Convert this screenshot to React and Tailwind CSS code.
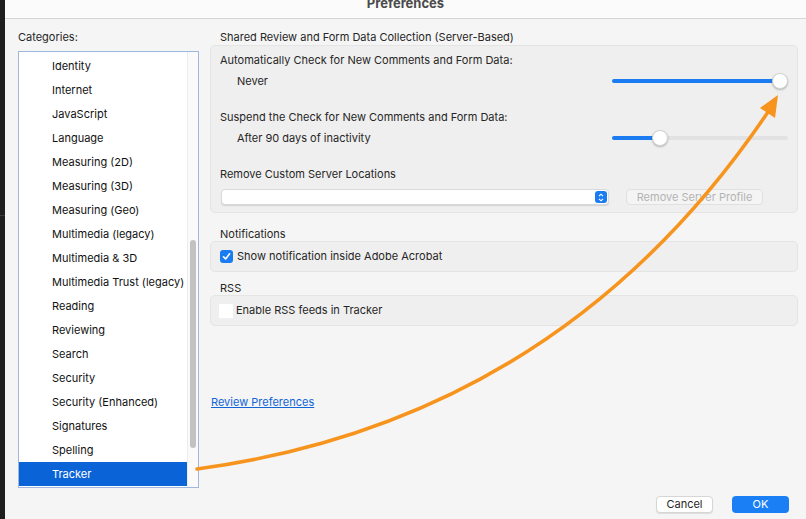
import React from "react";

const categories = [
  "Identity",
  "Internet",
  "JavaScript",
  "Language",
  "Measuring (2D)",
  "Measuring (3D)",
  "Measuring (Geo)",
  "Multimedia (legacy)",
  "Multimedia & 3D",
  "Multimedia Trust (legacy)",
  "Reading",
  "Reviewing",
  "Search",
  "Security",
  "Security (Enhanced)",
  "Signatures",
  "Spelling",
  "Tracker",
];

function Slider({ value }) {
  // value in px from the track start where the thumb centre sits
  return (
    <div className="relative h-4 w-[176px]">
      <div className="absolute left-0 right-0 top-[6px] h-[4px] rounded-full bg-[#e2e2e2]" />
      <div
        className="absolute left-0 top-[6px] h-[4px] rounded-full bg-[#1b7cf1]"
        style={{ width: value }}
      />
      <div
        className="absolute top-0 h-4 w-4 rounded-full border border-[#d4d4d4] bg-white shadow-[0_1px_2px_rgba(0,0,0,0.25)]"
        style={{ left: value - 8 }}
      />
    </div>
  );
}

export default function App() {
  return (
    <div
      className="relative flex h-[519px] w-[806px] overflow-hidden bg-[#f5f5f5] text-[11px] text-[#262626]"
      style={{ fontFamily: "Inter, 'Noto Sans', sans-serif" }}
    >
      <div className="flex w-[5px] flex-col bg-[#1e1e1e]">
        <div className="h-[215px]" />
        <div className="h-px bg-[#3a3a3a]" />
      </div>

      <div className="flex flex-1 flex-col">
        <div className="relative h-[19px] border-b border-[#d6d6d6] bg-[#fbfbfb]">
          <div className="absolute left-0 right-0 top-[-4px] text-center text-[13px] leading-[15px] font-bold text-[#4a4a4a]">
            Preferences
          </div>
        </div>

        <div className="flex flex-1">
          {/* left column */}
          <div className="ml-[13px] flex w-[181px] flex-col pt-[11px]">
            <div className="h-[14px] leading-[14px]">Categories:</div>
            <div className="mt-[7px] flex h-[437px] border border-[#9fb8db] bg-white">
              <div className="flex flex-1 flex-col pt-[2px]">
                {categories.map((c) => (
                  <div
                    key={c}
                    className={
                      c === "Tracker"
                        ? "h-[24px] bg-[#0b63d8] pl-[33px] leading-[24px] text-white"
                        : "h-[24px] pl-[33px] leading-[24px] text-[#111]"
                    }
                  >
                    {c}
                  </div>
                ))}
              </div>
              <div className="flex w-[11px] flex-col items-center border-l border-[#ececec] bg-[#fafafa] pt-[188px]">
                <div className="h-[208px] w-[6px] rounded-full bg-[#c2c2c2]" />
              </div>
            </div>
          </div>

          {/* right column */}
          <div className="ml-[11px] mr-[8px] flex flex-1 flex-col pt-[11px]">
            <div className="h-[14px] pl-[10px] leading-[14px]">
              Shared Review and Form Data Collection (Server-Based)
            </div>
            <div className="mt-px flex flex-col rounded-[5px] border border-[#e4e4e4] bg-[#efefef] px-[9px] pb-[7px] pt-[7px]">
              <div className="h-[14px] leading-[14px]">
                Automatically Check for New Comments and Form Data:
              </div>
              <div className="mt-[7px] flex h-[14px] items-center justify-between">
                <span className="pl-[17px] leading-[14px]">Never</span>
                <Slider value={168} />
              </div>
              <div className="mt-[22px] h-[14px] leading-[14px]">
                Suspend the Check for New Comments and Form Data:
              </div>
              <div className="mt-[7px] flex h-[14px] items-center justify-between">
                <span className="pl-[17px] leading-[14px]">After 90 days of inactivity</span>
                <Slider value={48} />
              </div>
              <div className="mt-[22px] h-[14px] leading-[14px]">
                Remove Custom Server Locations
              </div>
              <div className="mt-[8px] flex items-center">
                <div className="ml-px flex h-[16px] w-[388px] items-center justify-end rounded-[4px] border border-[#d9d9d9] bg-white pr-px shadow-[0_1px_1px_rgba(0,0,0,0.12)]">
                  <div className="flex h-[12px] w-[12px] flex-col items-center justify-center rounded-[3px] bg-[#1b7cf1]">
                    <svg width="6" height="9" viewBox="0 0 6 9">
                      <path
                        d="M1 3.2 L3 1.2 L5 3.2 M1 5.8 L3 7.8 L5 5.8"
                        fill="none"
                        stroke="white"
                        strokeWidth="1.1"
                      />
                    </svg>
                  </div>
                </div>
                <div className="ml-[17px] flex h-[16px] w-[137px] items-center justify-center rounded-[4px] border border-[#e0e0e0] bg-[#f4f4f4] text-[#b3b3b3]">
                  Remove Server Profile
                </div>
              </div>
            </div>

            <div className="mt-[14px] h-[14px] pl-[10px] leading-[14px]">Notifications</div>
            <div className="flex h-[31px] items-center rounded-[5px] border border-[#e4e4e4] bg-[#efefef] pl-[9px]">
              <div className="flex h-[13px] w-[13px] items-center justify-center rounded-[3px] bg-[#1b7cf1]">
                <svg width="9" height="9" viewBox="0 0 9 9">
                  <path
                    d="M1.5 4.8 L3.6 6.9 L7.6 1.8"
                    fill="none"
                    stroke="white"
                    strokeWidth="1.6"
                    strokeLinecap="round"
                    strokeLinejoin="round"
                  />
                </svg>
              </div>
              <span className="ml-[4px]">Show notification inside Adobe Acrobat</span>
            </div>

            <div className="mt-[9px] h-[14px] pl-[10px] leading-[14px]">RSS</div>
            <div className="flex h-[31px] items-center rounded-[5px] border border-[#e4e4e4] bg-[#efefef] pl-[8px]">
              <div className="h-[14px] w-[14px] bg-white" />
              <span className="ml-[3px]">Enable RSS feeds in Tracker</span>
            </div>

            <div className="mt-[69px] h-[14px] pl-px leading-[14px] text-[#1164d6] underline">
              Review Preferences
            </div>

            <div className="flex-1" />
            <div className="flex justify-end gap-[19px] pb-[6px] pr-[9px]">
              <div className="flex h-[17px] w-[57px] items-center justify-center rounded-[4px] border border-[#d6d6d6] bg-white shadow-[0_1px_1px_rgba(0,0,0,0.1)]">
                Cancel
              </div>
              <div className="flex h-[17px] w-[57px] items-center justify-center rounded-[4px] bg-[#1a7ff5] text-white">
                OK
              </div>
            </div>
          </div>
        </div>
      </div>

      {/* annotation arrow */}
      <svg
        className="pointer-events-none absolute left-0 top-0"
        width="806"
        height="519"
        viewBox="0 0 806 519"
      >
        <path
          d="M197 469 Q560 420 768 112"
          fill="none"
          stroke="#f7941d"
          strokeWidth="3.5"
          strokeLinecap="round"
        />
        <path d="M778 95 L760 108 L775 118 Z" fill="#f7941d" />
      </svg>
    </div>
  );
}
